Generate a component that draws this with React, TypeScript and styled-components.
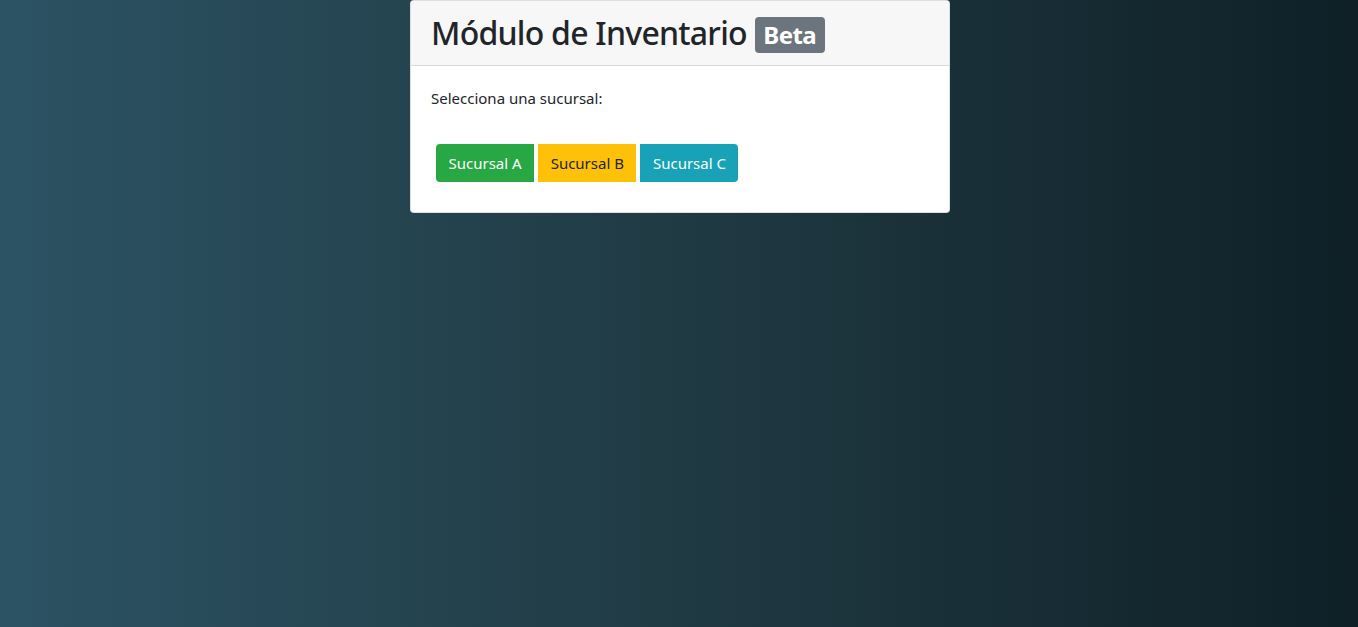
import React from 'react'
import styled, { createGlobalStyle } from 'styled-components'

const GlobalStyle = createGlobalStyle`
  html, body {
    margin: 0;
    padding: 0;
    min-height: 100%;
  }
  body {
    font-family: "Noto Sans", "Open Sans", Arial, sans-serif;
    font-size: 16px;
    line-height: 1.5;
    color: #212529;
    background: linear-gradient(to right, #2c5364, #203a43, #0f2027);
    min-height: 100vh;
  }
`

const Page = styled.main`
  display: flex;
  justify-content: center;
  align-items: flex-start;
  min-height: 100vh;
  padding-left: 2px;
`

const Card = styled.section`
  width: 540px;
  box-sizing: border-box;
  background: #fff;
  border: 1px solid rgba(0, 0, 0, 0.125);
  border-radius: 4px;
  overflow: hidden;
`

const CardHeader = styled.header`
  display: flex;
  align-items: center;
  height: 64px;
  padding: 0 20px;
  background: #f7f7f7;
  border-bottom: 1px solid rgba(0, 0, 0, 0.125);
`

const Title = styled.h1`
  margin: 0;
  font-size: 32px;
  font-weight: 500;
  line-height: 1.2;
  letter-spacing: -0.75px;
  color: #212529;
  display: flex;
  align-items: center;
  gap: 8px;
`

const Badge = styled.span`
  display: inline-block;
  background: #6c757d;
  color: #fff;
  font-size: 24px;
  font-weight: 700;
  line-height: 1;
  letter-spacing: -0.6px;
  padding: 6px 8.5px;
  margin-top: 4px;
  border-radius: 4px;
`

const CardBody = styled.div`
  padding: 21px 20px 30px;
`

const Lead = styled.p`
  margin: 0 0 34px;
  font-size: 15px;
`

const ButtonRow = styled.div`
  display: flex;
  gap: 4px;
  margin-left: 5px;
`

const tones = {
  success: { bg: '#28a745', fg: '#fff' },
  warning: { bg: '#ffc107', fg: '#212529' },
  info: { bg: '#17a2b8', fg: '#fff' },
}

const Branch = styled.button<{ $tone: keyof typeof tones; $pos: 'first' | 'mid' | 'last' }>`
  height: 38px;
  padding: 0 12.5px;
  border: none;
  font-family: inherit;
  font-size: 15px;
  background: ${p => tones[p.$tone].bg};
  color: ${p => tones[p.$tone].fg};
  border-radius: ${p =>
    p.$pos === 'first' ? '4px 0 0 4px' : p.$pos === 'last' ? '0 4px 4px 0' : '0'};
  cursor: pointer;
`

const App = () => {
  return (
    <Page>
      <GlobalStyle />
      <Card>
        <CardHeader>
          <Title>
            Módulo de Inventario <Badge>Beta</Badge>
          </Title>
        </CardHeader>
        <CardBody>
          <Lead>Selecciona una sucursal:</Lead>
          <ButtonRow>
            <Branch $tone="success" $pos="first">Sucursal A</Branch>
            <Branch $tone="warning" $pos="mid">Sucursal B</Branch>
            <Branch $tone="info" $pos="last">Sucursal C</Branch>
          </ButtonRow>
        </CardBody>
      </Card>
    </Page>
  )
}

export default App
